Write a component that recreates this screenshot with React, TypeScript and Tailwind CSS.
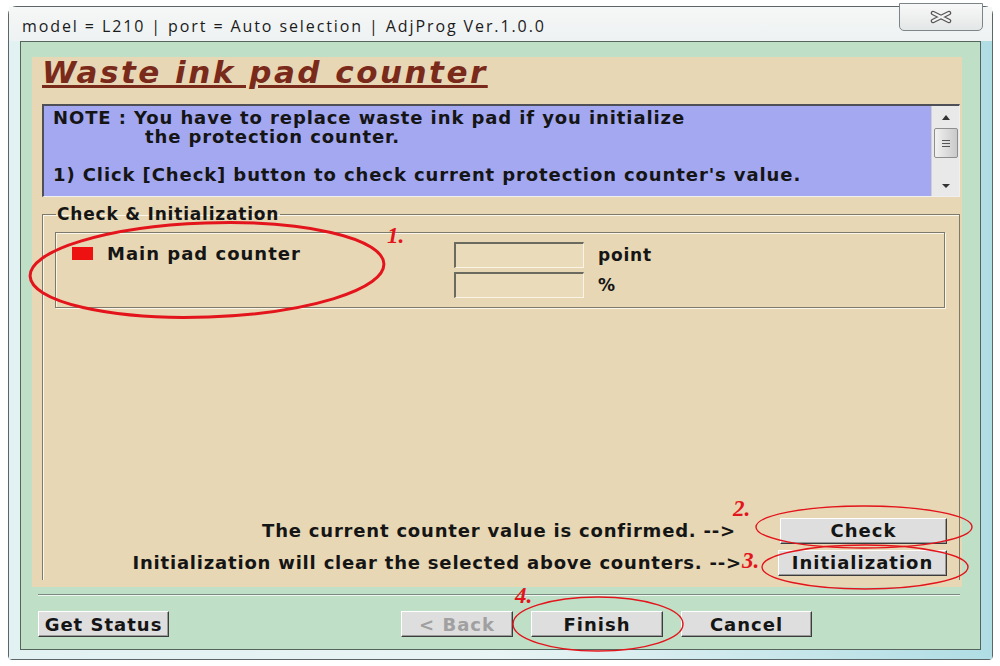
import React from "react";

const btn =
  "h-[26px] flex items-center justify-center bg-[#dedede] border border-t-white border-l-white border-r-[#3c3c3c] border-b-[#3c3c3c] shadow-[inset_-1px_-1px_0_#9a9a9a] font-bold text-[18px] tracking-[1px] text-[#151515]";

const ScrollBar = () => (
  <div className="w-[28px] bg-[#e9e9ea] border-l border-[#d0d0d0] flex flex-col items-center">
    <svg width="28" height="22" viewBox="0 0 28 22">
      <path d="M10 14 L14 9 L18 14 Z" fill="#333" />
    </svg>
    <div className="w-[24px] h-[30px] bg-linear-to-r from-[#f2f2f2] to-[#c9c9c9] border border-[#8e8e8e] rounded-[2px] flex items-center justify-center">
      <svg width="10" height="9" viewBox="0 0 10 9">
        <path d="M1 1.5 H9 M1 4.5 H9 M1 7.5 H9" stroke="#555" strokeWidth="1.2" />
      </svg>
    </div>
    <div className="flex-1" />
    <svg width="28" height="20" viewBox="0 0 28 20">
      <path d="M10 8 L14 12 L18 8 Z" fill="#333" />
    </svg>
  </div>
);

const Annotations = () => (
  <svg
    className="absolute inset-0 pointer-events-none"
    width="1000"
    height="666"
    viewBox="0 0 1000 666"
  >
    <ellipse cx="207" cy="270" rx="177" ry="47" transform="rotate(-2 207 270)" fill="none" stroke="#e3141b" strokeWidth="3" />
    <ellipse cx="864" cy="527" rx="108" ry="21" fill="none" stroke="#e3141b" strokeWidth="1.4" />
    <ellipse cx="865" cy="567" rx="103" ry="22" fill="none" stroke="#e3141b" strokeWidth="1.4" />
    <ellipse cx="598" cy="624" rx="85" ry="27" fill="none" stroke="#e3141b" strokeWidth="1.4" />
    <g fill="#e3141b" fontFamily="'Liberation Serif', serif" fontStyle="italic" fontWeight="bold" fontSize="23">
      <text x="387" y="243">1.</text>
      <text x="733" y="516">2.</text>
      <text x="742" y="568">3.</text>
      <text x="515" y="603">4.</text>
    </g>
  </svg>
);

export default function App() {
  return (
    <div className="relative w-[1000px] h-[666px] bg-white overflow-hidden pt-[6px] pl-[8px] font-['DejaVu_Sans',sans-serif]">
      <div className="w-[985px] h-[654px] rounded-t-[8px] rounded-b-[4px] border border-[#5c6668] bg-[#eef4f4] flex flex-col">
        {/* title bar */}
        <div className="h-[34px] flex items-start justify-between pl-[13px] pr-[9px] bg-linear-to-b from-[#f6f7f7] to-[#eef2f2]">
          <div className="mt-[7px] text-[16px] tracking-[1.9px] text-[#1b1b1b] font-['Open_Sans',sans-serif]">
            model = L210 | port = Auto selection | AdjProg Ver.1.0.0
          </div>
          <div className="w-[84px] h-[28px] -mt-[4px] rounded-b-[5px] border border-[#7c8688] bg-linear-to-b from-[#f8f8f8] to-[#e4e7e7] flex items-center justify-center">
            <svg width="24" height="14" viewBox="0 0 24 14">
              <path d="M4 3 L20 11 M20 3 L4 11" stroke="#555" strokeWidth="4.5" strokeLinecap="round" />
              <path d="M4 3 L20 11 M20 3 L4 11" stroke="#f4f4f4" strokeWidth="2" strokeLinecap="round" />
            </svg>
          </div>
        </div>

        {/* frame */}
        <div className="flex-1 px-[11px] pb-[9px] bg-linear-to-r from-[#e2f1f2] via-[#e9f4f4] to-[#b0dde4] flex">
          <div className="flex-1 border border-[#56645e] bg-[#bfe0c7] flex flex-col pt-[15px]">
            {/* tan panel */}
            <div className="ml-[11px] w-[930px] h-[530px] bg-[#e7d7b4] flex flex-col pl-[10px]">
              <div className="h-[34px]">
                <span className="text-[31px] font-bold italic tracking-[2.5px] text-[#7a2a1b] underline decoration-[3px] underline-offset-[2px] leading-[31px]">
                  Waste ink pad counter
                </span>
              </div>

              {/* note */}
              <div className="mt-[13px] w-[918px] h-[93px] flex border-t-2 border-l-2 border-[#4f4f58] border-r border-b border-r-[#f0f0f0] border-b-[#f0f0f0] bg-[#a3a8f1]">
                <div className="flex-1 pl-[9px] pt-[2px] text-[18px] font-bold tracking-[0.9px] leading-[19px] text-[#151515]">
                  <div>NOTE : You have to replace waste ink pad if you initialize</div>
                  <div className="pl-[92px]">the protection counter.</div>
                  <div className="h-[19px]" />
                  <div>1) Click [Check] button to check current protection counter's value.</div>
                </div>
                <ScrollBar />
              </div>

              {/* group */}
              <fieldset className="mt-[8px] w-[918px] h-[375px] border border-b-0 border-[#7d7a6c] shadow-[inset_1px_1px_0_#fbf6ea] pl-[12px] pr-[12px]">
                <legend className="ml-[1px] px-[1px] text-[17px] font-bold tracking-[0.8px] leading-[18px] text-[#151515]">
                  Check &amp; Initialization
                </legend>
                <div className="mt-[9px] w-[890px] h-[76px] border border-[#7d7a6c] shadow-[inset_1px_1px_0_#fbf6ea,1px_1px_0_#fbf6ea] flex pt-[9px]">
                  <div className="w-[398px] flex items-start pl-[16px] pt-[3px]">
                    <div className="w-[21px] h-[13px] bg-[#ee1111] mt-[2px]" />
                    <span className="ml-[14px] text-[18px] font-bold tracking-[1px] leading-[18px] text-[#151515]">
                      Main pad counter
                    </span>
                  </div>
                  <div className="flex flex-col gap-[4px]">
                    <div className="w-[130px] h-[26px] border-t-2 border-l-2 border-[#6b6a5e] border-r border-b border-r-[#faf4e6] border-b-[#faf4e6] bg-[#eadbba]" />
                    <div className="w-[130px] h-[26px] border-t-2 border-l-2 border-[#6b6a5e] border-r border-b border-r-[#faf4e6] border-b-[#faf4e6] bg-[#eadbba]" />
                  </div>
                  <div className="ml-[14px] flex flex-col text-[17px] font-bold tracking-[0.8px] text-[#151515]">
                    <div className="h-[30px] leading-[26px]">point</div>
                    <div className="h-[26px] leading-[26px]">%</div>
                  </div>
                </div>

                <div className="mt-[209px] flex items-center justify-end">
                  <span className="mr-[44px] text-[18px] font-bold tracking-[0.8px] text-[#151515]">
                    The current counter value is confirmed. --&gt;
                  </span>
                  <div className={`${btn} w-[167px]`}>Check</div>
                </div>
                <div className="mt-[5px] flex items-center justify-end">
                  <span className="mr-[36px] text-[18px] font-bold tracking-[0.8px] text-[#151515]">
                    Initialization will clear the selected above counters. --&gt;
                  </span>
                  <div className={`${btn} w-[169px]`}>Initialization</div>
                </div>
              </fieldset>
            </div>

            {/* separator */}
            <div className="mt-[7px] ml-[17px] w-[922px] h-[2px] border-t border-[#7a8a80] border-b border-b-[#eef8f0]" />

            {/* bottom buttons */}
            <div className="mt-[15px] flex items-center">
              <div className={`${btn} ml-[17px] w-[131px]`}>Get Status</div>
              <div className={`${btn} ml-[232px] w-[112px] text-[#a0a0a0]`}>&lt; Back</div>
              <div className={`${btn} ml-[18px] w-[132px]`}>Finish</div>
              <div className={`${btn} ml-[18px] w-[131px]`}>Cancel</div>
            </div>
          </div>
        </div>
      </div>
      <Annotations />
    </div>
  );
}
